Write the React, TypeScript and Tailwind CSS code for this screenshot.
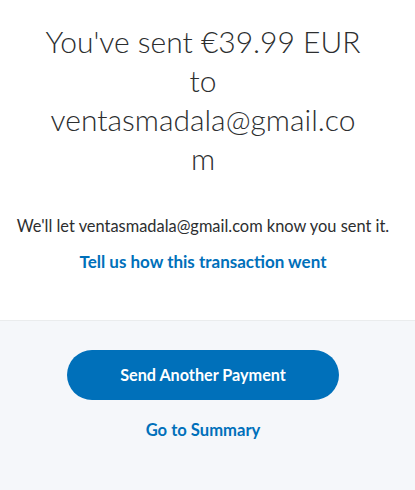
import React from "react";

export default function App() {
  return (
    <div className="w-[415px] h-[490px] flex flex-col bg-white" style={{ fontFamily: "Lato, 'Open Sans', sans-serif" }}>
      <div className="flex flex-col items-center pt-[22px] pr-[9px] h-[320px]">
        <h1 className="w-[316px] text-center text-[30px] leading-[39px] font-light text-[#2c2e2f] break-words">
          You've sent €39.99 EUR to ventasmadala@gmail.com
        </h1>
        <p className="mt-[36px] text-[16.4px] text-[#2c2e2f]">
          We'll let ventasmadala@gmail.com know you sent it.
        </p>
        <a className="mt-[10px] text-[17px] font-bold text-[#0070ba]">Tell us how this transaction went</a>
      </div>
      <div className="flex-1 bg-[#f5f7fa] border-t border-[#eaeced] flex flex-col items-center pt-[29px] pr-[9px]">
        <button className="w-[272px] h-[50px] rounded-full bg-[#0070ba] text-white text-[16.2px] font-bold">
          Send Another Payment
        </button>
        <a className="mt-[18px] text-[16.6px] font-bold text-[#0070ba]">Go to Summary</a>
      </div>
    </div>
  );
}
